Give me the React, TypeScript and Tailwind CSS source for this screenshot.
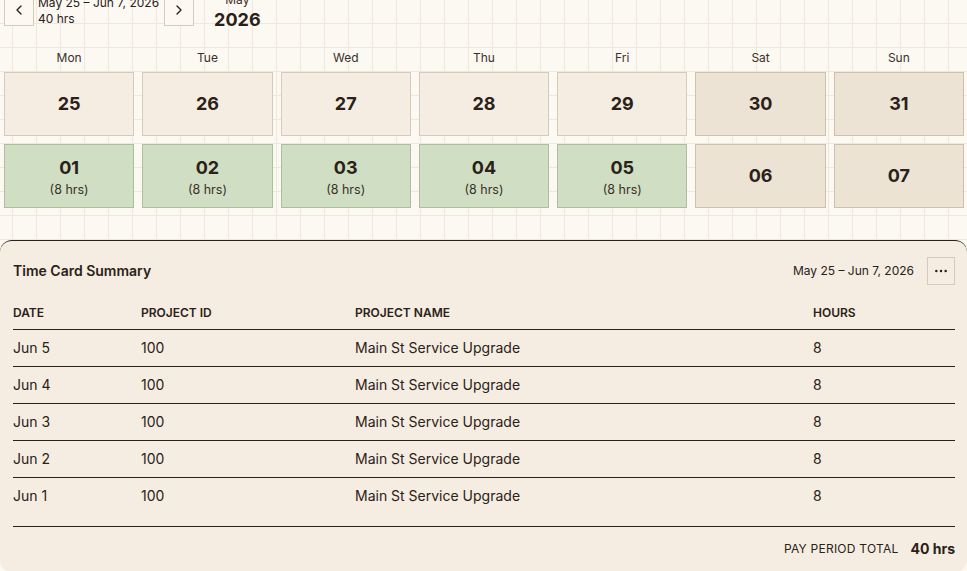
import { ChevronLeft, ChevronRight, Ellipsis } from "lucide-react";

type Day = {
  label: string;
  hours?: number;
  weekend?: boolean;
};

const weekdays = ["Mon", "Tue", "Wed", "Thu", "Fri", "Sat", "Sun"];

const weeks: Day[][] = [
  [
    { label: "25" },
    { label: "26" },
    { label: "27" },
    { label: "28" },
    { label: "29" },
    { label: "30", weekend: true },
    { label: "31", weekend: true },
  ],
  [
    { label: "01", hours: 8 },
    { label: "02", hours: 8 },
    { label: "03", hours: 8 },
    { label: "04", hours: 8 },
    { label: "05", hours: 8 },
    { label: "06", weekend: true },
    { label: "07", weekend: true },
  ],
];

const entries = [
  { date: "Jun 5", projectId: "100", projectName: "Main St Service Upgrade", hours: 8 },
  { date: "Jun 4", projectId: "100", projectName: "Main St Service Upgrade", hours: 8 },
  { date: "Jun 3", projectId: "100", projectName: "Main St Service Upgrade", hours: 8 },
  { date: "Jun 2", projectId: "100", projectName: "Main St Service Upgrade", hours: 8 },
  { date: "Jun 1", projectId: "100", projectName: "Main St Service Upgrade", hours: 8 },
];

const DayCell = ({ day }: { day: Day }) => {
  const tone = day.hours
    ? "bg-[#d0dfc3] border-[#adbd9e] pt-[2px]"
    : day.weekend
      ? "bg-[#ece3d4] border-[#cdc1ae]"
      : "bg-[#f5ede1] border-[#d5cabb]";

  return (
    <div
      className={`flex h-16 flex-col items-center justify-center border ${tone}`}
    >
      <span className="text-[18px] leading-6 font-bold text-[#2a2119]">
        {day.label}
      </span>
      {day.hours && (
        <span className="mt-[2px] text-[12.5px] leading-4 text-[#3a3029]">
          ({day.hours} hrs)
        </span>
      )}
    </div>
  );
};

export default function App() {
  const total = entries.reduce((sum, e) => sum + e.hours, 0);

  return (
    <div className="h-[571px] overflow-hidden bg-[#fcf8f2] font-['Inter',sans-serif] text-[#2a2119]">
      <div className="-mt-2 bg-[linear-gradient(to_right,#efe8de_1px,transparent_1px),linear-gradient(to_bottom,#efe8de_1px,transparent_1px)] [background-position:12px_7px] [background-size:24px_24px]">
        {/* Period navigation */}
        <div className="flex h-10 items-start pl-1">
          <button className="mt-[2px] flex h-8 w-[30px] items-center justify-center border border-[#d5cabb] bg-[#fcf8f2] text-[#2a2119]">
            <ChevronLeft size={16} strokeWidth={2} />
          </button>
          <div className="mt-[3px] ml-1 text-xs leading-4 text-[#2a2119]">
            <div>May 25 – Jun 7, 2026</div>
            <div>40 hrs</div>
          </div>
          <button className="mt-[2px] ml-[5px] flex h-8 w-[30px] items-center justify-center border border-[#d5cabb] bg-[#fcf8f2] text-[#2a2119]">
            <ChevronRight size={16} strokeWidth={2} />
          </button>
          <div className="ml-5 flex flex-col items-center">
            <span className="text-xs leading-4 text-[#3a3029]">May</span>
            <span className="text-[18px] leading-6 font-bold">2026</span>
          </div>
        </div>

        {/* Calendar */}
        <div className="pr-[3px] pl-1">
          <div className="mt-[18px] mb-[6px] grid grid-cols-7 gap-2">
            {weekdays.map((d) => (
              <div key={d} className="text-center text-xs leading-4 text-[#3a3029]">
                {d}
              </div>
            ))}
          </div>
          <div className="grid grid-cols-7 gap-2">
            {weeks.flat().map((day, i) => (
              <DayCell key={i} day={day} />
            ))}
          </div>
        </div>

        {/* Summary panel */}
        <div className="mt-8 h-[332px] rounded-xl border-t border-[#2a2119] bg-[#f5ede1] pt-4 pr-3 pl-[13px]">
          <div className="flex h-7 items-center justify-between">
            <h2 className="text-sm font-semibold">Time Card Summary</h2>
            <div className="flex items-center gap-[13px]">
              <span className="text-xs text-[#2a2119]">May 25 – Jun 7, 2026</span>
              <button className="flex h-7 w-7 items-center justify-center border border-[#d5cabb] text-[#2a2119]">
                <Ellipsis size={16} strokeWidth={1.75} />
              </button>
            </div>
          </div>

          <table className="mt-3 w-full table-fixed border-collapse text-left">
            <thead>
              <tr className="h-8 border-b border-[#2a2119] text-xs font-semibold uppercase">
                <th className="w-[128px] font-semibold">Date</th>
                <th className="w-[214px] font-semibold">Project ID</th>
                <th className="w-[458px] font-semibold">Project Name</th>
                <th className="font-semibold">Hours</th>
              </tr>
            </thead>
            <tbody className="text-sm">
              {entries.map((e, i) => (
                <tr
                  key={e.date}
                  className={`h-[37px] ${i < entries.length - 1 ? "border-b border-[#2a2119]" : ""}`}
                >
                  <td>{e.date}</td>
                  <td>{e.projectId}</td>
                  <td>{e.projectName}</td>
                  <td>{e.hours}</td>
                </tr>
              ))}
            </tbody>
          </table>

          <div className="mt-3 flex h-11 items-center justify-end gap-3 border-t border-[#2a2119]">
            <span className="text-xs tracking-[0.02em] uppercase">Pay Period Total</span>
            <span className="text-sm font-bold">{total} hrs</span>
          </div>
        </div>
      </div>
    </div>
  );
}
